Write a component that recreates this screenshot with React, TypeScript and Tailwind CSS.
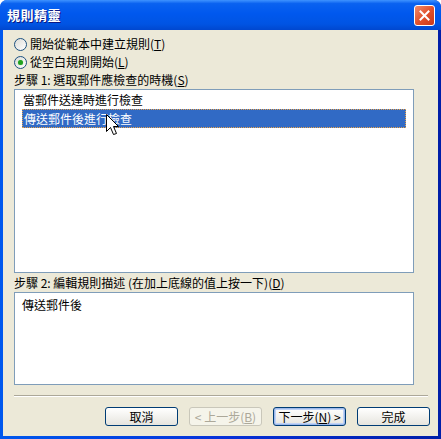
const font = "font-['Noto_Sans_CJK_TC',sans-serif]";

function Radio({ checked, label, hot }: { checked?: boolean; label: string; hot: string }) {
  return (
    <div className="flex h-[18px] items-center gap-[3px]">
      <div className="relative flex h-[13px] w-[13px] items-center justify-center rounded-full border border-[#1C5180] bg-gradient-to-br from-[#DCDCD7] to-white">
        {checked && <div className="h-[5px] w-[5px] rounded-full bg-[#21A121] shadow-[0_0_1px_#7be37b]" />}
      </div>
      <span className="text-[12px] leading-none text-black">
        {label}(<span className="underline">{hot}</span>)
      </span>
    </div>
  );
}

function Button({ children, disabled, primary }: { children: React.ReactNode; disabled?: boolean; primary?: boolean }) {
  return (
    <div
      className={
        "flex h-[19px] w-[73px] items-center justify-center rounded-[3px] border text-[12px] leading-none " +
        (disabled
          ? "border-[#C9C7BA] bg-[#F5F4EA] text-[#ACA899]"
          : primary
          ? "border-[#003C74] bg-gradient-to-b from-white to-[#E6E5DE] text-black shadow-[inset_0_0_0_1px_#9DB9EB,inset_0_0_0_2px_#C0D3F6]"
          : "border-[#003C74] bg-gradient-to-b from-white to-[#E6E5DE] text-black")
      }
    >
      {children}
    </div>
  );
}

export default function App() {
  return (
    <div className={`flex h-[439px] w-[441px] flex-col overflow-hidden rounded-t-[7px] bg-gradient-to-r from-[#0058EE] via-[#0831D9] to-[#001EA8] ${font}`}>
      {/* title bar */}
      <div className="flex h-[30px] shrink-0 items-center justify-between bg-[linear-gradient(to_bottom,#3F93FF_0%,#0A62F0_12%,#0058EE_45%,#0054E3_80%,#0047CF_100%)] pl-[7px] pr-[6px]">
        <span className="text-[13px] font-bold tracking-[0.5px] text-white [text-shadow:1px_1px_0_#0A1883]">規則精靈</span>
        <div className="flex h-[21px] w-[21px] items-center justify-center rounded-[3px] border border-white bg-gradient-to-br from-[#F08A6A] via-[#E2512C] to-[#C8381A]">
          <svg width="11" height="11" viewBox="0 0 11 11">
            <path d="M1.5 1.5 L9.5 9.5 M9.5 1.5 L1.5 9.5" stroke="white" strokeWidth="2" strokeLinecap="square" />
          </svg>
        </div>
      </div>

      {/* body */}
      <div className="mx-[3px] mb-[3px] flex flex-1 flex-col bg-[#ECE9D8] pl-[11px] pr-[10px] pt-[5px]">
        <div className="pr-[14px]">
          <Radio label="開始從範本中建立規則" hot="T" />
          <Radio checked label="從空白規則開始" hot="L" />
          <div className="flex h-[18px] items-center text-[12px] leading-none text-black">
            步驟 1: 選取郵件應檢查的時機(<span className="underline">S</span>)
          </div>
          <div className="relative h-[184px] border border-[#7F9DB9] bg-white px-[7px] pt-[1px]">
            <div className="flex h-[18px] items-center pl-[1px] text-[12px] leading-none text-black">當郵件送達時進行檢查</div>
            <div className="flex h-[19px] items-center border border-dotted border-[#E8A24A] bg-[#316AC5] pl-[1px] text-[12px] leading-none text-white">
              傳送郵件後進行檢查
            </div>
            {/* mouse cursor */}
            <svg className="absolute left-[91px] top-[24px]" width="13" height="22" viewBox="0 0 13 22">
              <path
                d="M0.5 0.5 L0.5 17.5 L4.5 13.5 L7.5 20.5 L10.5 19.5 L7.5 12.5 L12.5 12.5 Z"
                fill="white"
                stroke="black"
                strokeWidth="1"
              />
            </svg>
          </div>
          <div className="flex h-[19px] items-center text-[12px] leading-none text-black">
            步驟 2: 編輯規則描述 (在加上底線的值上按一下)(<span className="underline">D</span>)
          </div>
          <div className="h-[93px] border border-[#7F9DB9] bg-white px-[7px] pt-[4px]">
            <div className="text-[12px] leading-[16px] text-black">傳送郵件後</div>
          </div>
        </div>

        <div className="mt-[10px] border-t border-b border-t-[#ACA899] border-b-white" />

        <div className="-mr-[2px] mt-[10px] flex justify-end gap-[11px]">
          <Button>取消</Button>
          <Button disabled>
            &lt; 上一步(<span className="underline">B</span>)
          </Button>
          <Button primary>
            下一步(<span className="underline">N</span>) &gt;
          </Button>
          <Button>完成</Button>
        </div>
      </div>
    </div>
  );
}
